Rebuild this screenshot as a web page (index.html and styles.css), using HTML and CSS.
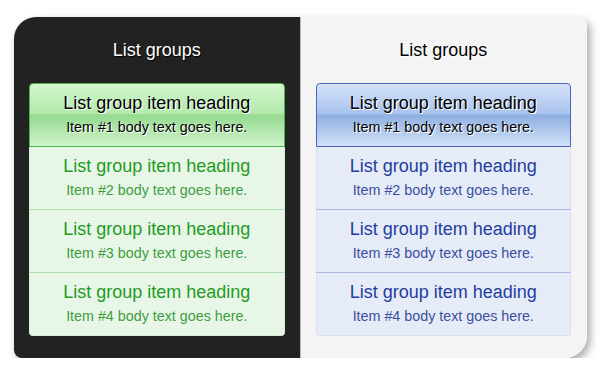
FILE: index.html
```html
<!DOCTYPE html>
<html lang="en">

<head>
    <meta charset="UTF-8">
    <meta name="viewport" content="width=device-width, initial-scale=1.0">
    <title>List groups</title>
    <link rel="stylesheet" href="styles.css">
</head>

<body>
    <div class="card">
        <!-- Painel escuro -->
        <div class="panel panel-dark">
            <h2 class="title">List groups</h2>
            <div class="list-group green">
                <div class="list-item active">
                    <div class="item-heading">List group item heading</div>
                    <div class="item-text">Item #1 body text goes here.</div>
                </div>
                <div class="list-item">
                    <div class="item-heading">List group item heading</div>
                    <div class="item-text">Item #2 body text goes here.</div>
                </div>
                <div class="list-item">
                    <div class="item-heading">List group item heading</div>
                    <div class="item-text">Item #3 body text goes here.</div>
                </div>
                <div class="list-item">
                    <div class="item-heading">List group item heading</div>
                    <div class="item-text">Item #4 body text goes here.</div>
                </div>
            </div>
        </div>

        <!-- Painel claro -->
        <div class="panel panel-light">
            <h2 class="title">List groups</h2>
            <div class="list-group blue">
                <div class="list-item active">
                    <div class="item-heading">List group item heading</div>
                    <div class="item-text">Item #1 body text goes here.</div>
                </div>
                <div class="list-item">
                    <div class="item-heading">List group item heading</div>
                    <div class="item-text">Item #2 body text goes here.</div>
                </div>
                <div class="list-item">
                    <div class="item-heading">List group item heading</div>
                    <div class="item-text">Item #3 body text goes here.</div>
                </div>
                <div class="list-item">
                    <div class="item-heading">List group item heading</div>
                    <div class="item-text">Item #4 body text goes here.</div>
                </div>
            </div>
        </div>
    </div>
</body>

</html>
```

FILE: styles.css
```css
body {
    margin: 0;
    padding: 17px 0 0 14px;
    background-color: #fff;
    font-family: "Liberation Sans", Arial, sans-serif;
}

.card {
    display: flex;
    width: 573px;
    border-radius: 22px 8px 22px 8px;
    overflow: hidden;
    box-shadow: 3px 4px 8px rgba(0, 0, 0, 0.35);
}

.panel {
    flex: 1;
    padding: 22px 15px 22px;
}

.panel-dark {
    background-color: #222;
}

.panel-light {
    background-color: #f4f4f4;
    border-left: 1px solid #bbb;
    padding-left: 15px;
    padding-right: 16px;
}

.title {
    margin: 0 0 22px;
    font-size: 18px;
    font-weight: normal;
    line-height: 22px;
    text-align: center;
}

.panel-dark .title {
    color: #fff;
    text-shadow: 1px 1px 1px #000;
}

.panel-light .title {
    color: #000;
    text-shadow: 1px 1px 1px #fff;
}

.list-group {
    border-radius: 4px;
}

.list-item {
    padding: 9px 8px 9px;
    text-align: center;
    border: 1px solid;
    border-top: none;
}

.list-item:first-child {
    border-top: 1px solid;
    border-radius: 4px 4px 0 0;
}

.list-item:last-child {
    border-radius: 0 0 4px 4px;
}

.item-heading {
    font-size: 18px;
    line-height: 21px;
    margin-bottom: 3px;
}

.item-text {
    font-size: 14.3px;
    line-height: 20px;
}

/* Verde */
.green .list-item {
    background-color: #e8f6e8;
    border-color: #d6ecd6;
    border-bottom-color: #b3deb3;
    color: #1f9c1f;
}

.green .list-item:last-child {
    border-bottom-color: #d6ecd6;
}

.green .item-text {
    color: #3e9e3e;
}

.green .list-item.active {
    background: linear-gradient(to bottom, #d4f6cf 0%, #b2e9ab 48%, #95da8f 50%, #d0f3cb 100%);
    border-color: #4cb84c;
    color: #000;
    text-shadow: 1px 1px 0 #fff;
}

.green .list-item.active .item-text {
    color: #000;
}

/* Azul */
.blue .list-item {
    background-color: #e6ebf8;
    border-color: #d9def0;
    border-bottom-color: #aeb6e2;
    color: #1f3e9e;
}

.blue .list-item:last-child {
    border-bottom-color: #d9def0;
}

.blue .item-text {
    color: #3a4f9e;
}

.blue .list-item.active {
    background: linear-gradient(to bottom, #d5e3fa 0%, #a8c2ec 48%, #8eb0e0 50%, #d1e0f8 100%);
    border-color: #4a62c0;
    color: #000;
    text-shadow: 1px 1px 0 #fff;
}

.blue .list-item.active .item-text {
    color: #000;
}
```
